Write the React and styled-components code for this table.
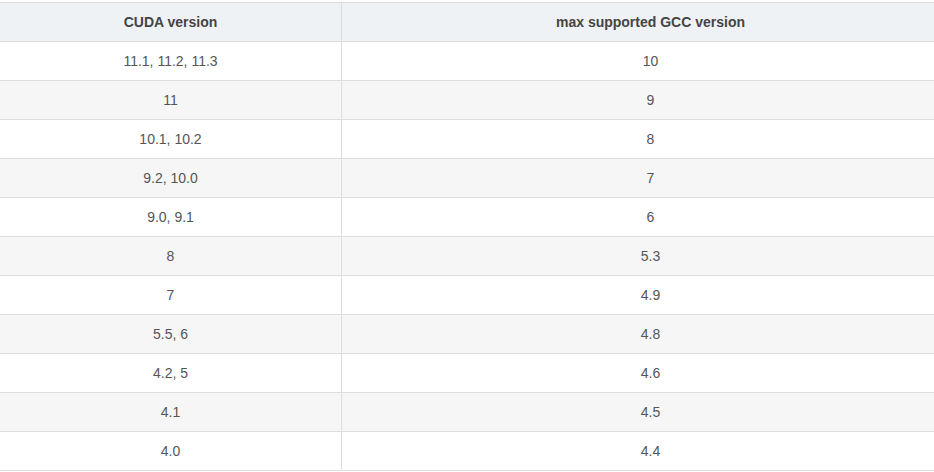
import React from 'react';
import styled, { createGlobalStyle } from 'styled-components';

const GlobalStyle = createGlobalStyle`
  body {
    margin: 0;
    background: #fff;
    overflow: hidden;
    font-family: "Liberation Sans", Arial, sans-serif;
  }
`;

const Page = styled.div`
  padding-top: 2px;
  margin-left: -1px;
  width: 961px;
`;

const Table = styled.table`
  width: 961px;
  border-collapse: collapse;
  table-layout: fixed;
  font-size: 14px;
  color: #555;
`;

const HeadCell = styled.th`
  height: 38px;
  padding: 0 8px;
  background: #eff2f5;
  color: #444;
  font-weight: bold;
  text-align: center;
  border: 1px solid #dddddd;
  width: ${({ width }) => (width ? `${width}px` : 'auto')};
`;

const Row = styled.tr`
  background: ${({ striped }) => (striped ? '#f6f6f6' : '#ffffff')};
`;

const Cell = styled.td`
  height: 38px;
  padding: 0 8px;
  text-align: center;
  border: 1px solid #dddddd;
`;

const rows = [
  ['11.1, 11.2, 11.3', '10'],
  ['11', '9'],
  ['10.1, 10.2', '8'],
  ['9.2, 10.0', '7'],
  ['9.0, 9.1', '6'],
  ['8', '5.3'],
  ['7', '4.9'],
  ['5.5, 6', '4.8'],
  ['4.2, 5', '4.6'],
  ['4.1', '4.5'],
  ['4.0', '4.4'],
];

const App = () => (
  <>
    <GlobalStyle />
    <Page>
      <Table>
        <thead>
          <tr>
            <HeadCell width={325}>CUDA version</HeadCell>
            <HeadCell>max supported GCC version</HeadCell>
          </tr>
        </thead>
        <tbody>
          {rows.map(([cuda, gcc], i) => (
            <Row key={cuda} striped={i % 2 === 1}>
              <Cell>{cuda}</Cell>
              <Cell>{gcc}</Cell>
            </Row>
          ))}
        </tbody>
      </Table>
    </Page>
  </>
);

export default App;
